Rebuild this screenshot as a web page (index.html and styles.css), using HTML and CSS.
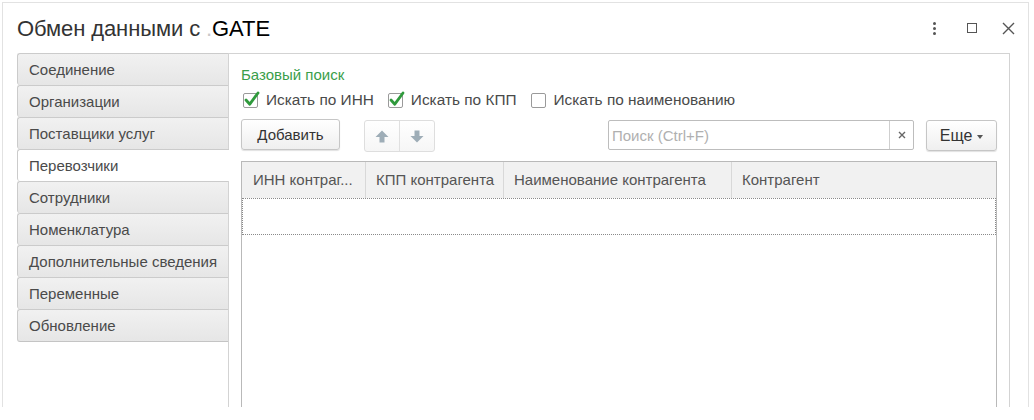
FILE: index.html
```html
<!DOCTYPE html>
<html lang="ru">
<head>
<meta charset="utf-8">
<title>Обмен данными с .GATE</title>
<link rel="stylesheet" href="styles.css">
</head>
<body>
<div class="window">
  <div class="header">
    <div class="title">Обмен данными с <span class="dot">.</span><span class="gate">GATE</span></div>
    <div class="win-icons">
      <span class="icon-more"><i></i><i></i><i></i></span>
      <span class="icon-max"></span>
      <svg class="icon-close" width="13" height="13" viewBox="0 0 13 13"><path d="M1 1 L12 12 M12 1 L1 12" stroke="#555" stroke-width="1.4" fill="none"/></svg>
    </div>
  </div>
  <div class="main">
    <div class="tabs">
      <div class="tab">Соединение</div>
      <div class="tab">Организации</div>
      <div class="tab">Поставщики услуг</div>
      <div class="tab active">Перевозчики</div>
      <div class="tab">Сотрудники</div>
      <div class="tab">Номенклатура</div>
      <div class="tab">Дополнительные сведения</div>
      <div class="tab">Переменные</div>
      <div class="tab last">Обновление</div>
    </div>
    <div class="panel">
      <div class="group-title">Базовый поиск</div>
      <div class="checks">
        <label class="check"><span class="box"><svg width="18" height="17" viewBox="0 0 18 17"><path d="M3 9 L6.8 13.2 L15 2" stroke="#2f9a3c" stroke-width="2.8" fill="none" stroke-linecap="round" stroke-linejoin="round"/></svg></span><span class="ctext">Искать по ИНН</span></label>
        <label class="check"><span class="box"><svg width="18" height="17" viewBox="0 0 18 17"><path d="M3 9 L6.8 13.2 L15 2" stroke="#2f9a3c" stroke-width="2.8" fill="none" stroke-linecap="round" stroke-linejoin="round"/></svg></span><span class="ctext">Искать по КПП</span></label>
        <label class="check"><span class="box"></span><span class="ctext">Искать по наименованию</span></label>
      </div>
      <div class="toolbar">
        <button class="btn add">Добавить</button>
        <div class="arrows">
          <span class="arr"><svg width="14" height="13" viewBox="0 0 14 13"><path d="M7 0.5 L13.5 7 L9.5 7 L9.5 12.5 L4.5 12.5 L4.5 7 L0.5 7 Z" fill="#9eadb7"/></svg></span>
          <span class="arr"><svg width="14" height="13" viewBox="0 0 14 13"><path d="M7 12.5 L13.5 6 L9.5 6 L9.5 0.5 L4.5 0.5 L4.5 6 L0.5 6 Z" fill="#9eadb7"/></svg></span>
        </div>
        <div class="spacer"></div>
        <div class="search">
          <span class="placeholder">Поиск (Ctrl+F)</span>
          <span class="clear"><svg width="8" height="8" viewBox="0 0 8 8"><path d="M1 1 L7 7 M7 1 L1 7" stroke="#666" stroke-width="1.4" fill="none"/></svg></span>
        </div>
        <button class="btn more">Еще <span class="caret"></span></button>
      </div>
      <div class="table">
        <div class="thead">
          <div class="th c1">ИНН контраг...</div>
          <div class="th c2">КПП контрагента</div>
          <div class="th c3">Наименование контрагента</div>
          <div class="th c4">Контрагент</div>
        </div>
        <div class="row"></div>
      </div>
    </div>
  </div>
</div>
</body>
</html>
```
FILE: styles.css
```css
html, body {
  margin: 0;
  padding: 0;
  background: #fff;
}
body {
  font-family: "Liberation Sans", Arial, sans-serif;
  width: 1034px;
  height: 420px;
  overflow: hidden;
}
.window {
  margin: 2px 0 0 2px;
  width: 1025px;
  height: 404px;
  border: 1px solid #e2e2e2;
  border-bottom: none;
  display: flex;
  flex-direction: column;
  overflow: hidden;
}
.header {
  height: 50px;
  display: flex;
  align-items: center;
  padding: 0 0 0 14px;
}
.title {
  font-size: 22px;
  color: #333;
  flex: 1;
  margin-top: 1px;
  letter-spacing: -0.1px;
}
.title .dot {
  color: #c8c8c8;
}
.title .gate {
  color: #000;
}
.win-icons {
  display: flex;
  align-items: center;
  margin-right: 13px;
}
.icon-more {
  display: flex;
  flex-direction: column;
  gap: 2px;
  width: 3px;
  margin-right: 31px;
}
.icon-more i {
  display: block;
  width: 3px;
  height: 3px;
  border-radius: 50%;
  background: #555;
}
.icon-max {
  display: block;
  width: 8px;
  height: 8px;
  border: 1.5px solid #555;
  margin-right: 25px;
}
.main {
  flex: 1;
  display: flex;
  padding-left: 14px;
  padding-right: 18px;
}
.tabs {
  width: 211px;
  display: flex;
  flex-direction: column;
}
.tab {
  height: 31px;
  border: 1px solid #cbcbcb;
  border-bottom: none;
  border-right: none;
  border-radius: 3px 0 0 3px;
  background: linear-gradient(#f1f1f1, #e6e6e6);
  color: #4a4a4a;
  font-size: 15px;
  line-height: 31px;
  padding-left: 11px;
  white-space: nowrap;
}
.tab.last {
  border-bottom: 1px solid #c4c4c4;
}
.tab.active {
  background: #fff;
  margin-right: -1px;
  position: relative;
  z-index: 1;
}
.panel {
  flex: 1;
  border: 1px solid #d3d3d3;
  border-bottom: none;
  padding: 13px 12px 0 12px;
  display: flex;
  flex-direction: column;
}
.group-title {
  color: #3a9e4a;
  font-size: 15px;
  line-height: 16px;
}
.checks {
  display: flex;
  align-items: center;
  margin-top: 8px;
  height: 18px;
}
.check {
  display: flex;
  align-items: center;
  margin-right: 12px;
}
.box {
  position: relative;
  width: 13px;
  height: 13px;
  border: 1px solid #9a9a9a;
  border-radius: 2px;
  background: #fff;
  margin-left: 2px;
}
.box svg {
  position: absolute;
  left: -1px;
  top: -3px;
}
.ctext {
  font-size: 15.4px;
  color: #4a4a4a;
  margin-left: 8px;
}
.toolbar {
  display: flex;
  align-items: flex-start;
  margin-top: 10px;
  height: 32px;
}
.btn {
  font-family: "Liberation Sans", Arial, sans-serif;
  font-size: 15px;
  color: #333;
  background: linear-gradient(#fff, #efefef);
  border: 1px solid #c6c6c6;
  border-radius: 3px;
  box-shadow: 0 1px 1px rgba(0,0,0,0.12);
  padding: 0;
  cursor: default;
}
.btn.add {
  width: 99px;
  height: 31px;
}
.arrows {
  display: flex;
  margin-left: 24px;
  margin-top: 1px;
  height: 30px;
  border: 1px solid #dedede;
  border-radius: 3px;
  background: linear-gradient(#fff, #f6f6f6);
}
.arr {
  width: 34px;
  height: 30px;
  display: flex;
  align-items: center;
  justify-content: center;
}
.arr + .arr {
  border-left: 1px solid #e0e0e0;
}
.spacer {
  flex: 1;
}
.search {
  margin-top: 1px;
  width: 304px;
  height: 28px;
  border: 1px solid #bdbdbd;
  border-radius: 2px;
  display: flex;
  align-items: center;
  background: #fff;
}
.placeholder {
  flex: 1;
  font-size: 15px;
  color: #b0b0b0;
  padding-left: 3px;
}
.clear {
  width: 23px;
  height: 28px;
  border-left: 1px solid #cfcfcf;
  display: flex;
  align-items: center;
  justify-content: center;
}
.btn.more {
  margin-top: 1px;
  margin-left: 12px;
  width: 71px;
  height: 31px;
  font-size: 16px;
  display: flex;
  align-items: center;
  justify-content: center;
}
.caret {
  display: inline-block;
  width: 0;
  height: 0;
  border-left: 3px solid transparent;
  border-right: 3px solid transparent;
  border-top: 4px solid #555;
  margin-left: 5px;
  margin-top: 2px;
}
.table {
  flex: 1;
  margin-top: 10px;
  border: 1px solid #b9b9b9;
  border-bottom: none;
  display: flex;
  flex-direction: column;
}
.thead {
  display: flex;
  height: 36px;
  background: #f1f1f1;
}
.th {
  font-size: 15px;
  color: #555;
  line-height: 36px;
  padding-left: 10px;
  white-space: nowrap;
  overflow: hidden;
  border-right: 1px solid #d8d8d8;
  box-sizing: border-box;
}
.th.c1 { width: 124px; padding-left: 11px; }
.th.c2 { width: 138px; }
.th.c3 { width: 228px; }
.th.c4 { flex: 1; border-right: none; }
.row {
  height: 35px;
  border: 1px dotted #8a8a8a;
}
```
